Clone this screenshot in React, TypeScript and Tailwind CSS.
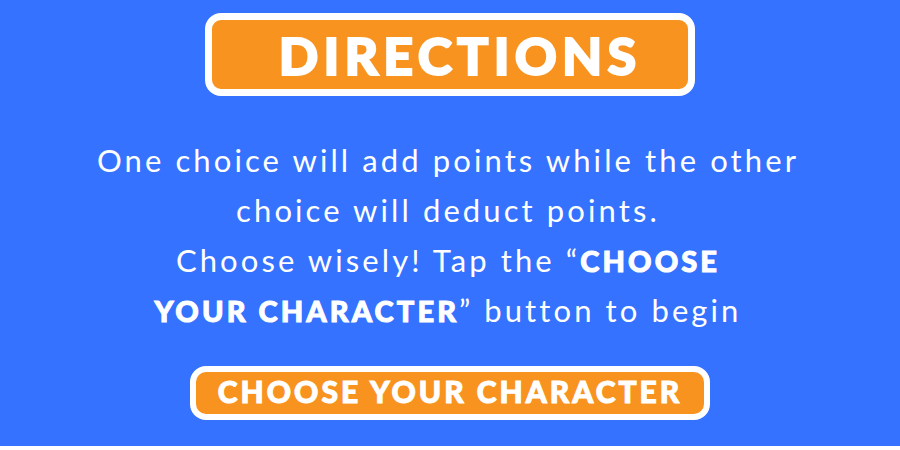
export default function App() {
  return (
    <main className="flex flex-col items-center bg-[#3472ff] px-6 pt-[13px] pb-[26px] font-['Lato',sans-serif] text-white">
      <h1 className="w-full max-w-[490px] rounded-2xl border-[7px] border-white bg-[#f99320] pt-px pl-5 text-center text-[52px] leading-[68px] font-black tracking-widest [-webkit-text-stroke:2px_white]">
        DIRECTIONS
      </h1>
      <p className="mt-[39px] pr-1 text-center text-[31px] leading-[50px] tracking-widest">
        One choice will add points while the other
        <br />
        choice will deduct points.
        <br />
        Choose wisely! Tap the “
        <strong className="text-[29px] leading-none font-black [-webkit-text-stroke:1px_white]">CHOOSE</strong>
        <br />
        <strong className="text-[29px] leading-none font-black [-webkit-text-stroke:1px_white]">YOUR CHARACTER</strong>
        ” button to begin
      </p>
      <button
        type="button"
        className="mt-[31px] w-full max-w-[520px] rounded-2xl border-[6px] border-white bg-[#f99320] pb-1 text-center text-[30px] leading-[38px] font-black tracking-widest [-webkit-text-stroke:1px_white]"
      >
        CHOOSE YOUR CHARACTER
      </button>
    </main>
  );
}
